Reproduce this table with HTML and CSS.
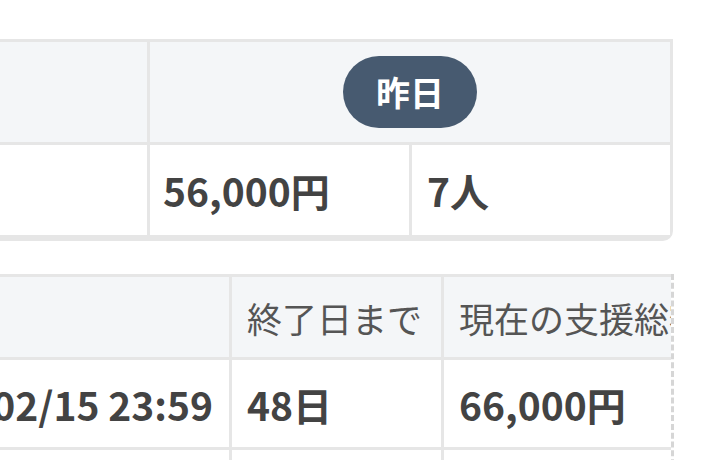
FILE: index.html
```html
<!DOCTYPE html>
<html lang="ja">
<head>
<meta charset="utf-8">
<link rel="stylesheet" href="styles.css">
</head>
<body>
<div class="page">
  <div class="card">
    <div class="cell head first"></div>
    <div class="cell head span2"><span class="badge">昨日</span></div>
    <div class="cell body first"></div>
    <div class="cell body val">56,000円</div>
    <div class="cell body val">7人</div>
  </div>

  <div class="scroller">
    <div class="viewport">
      <div class="grid">
        <div class="cell head first"></div>
        <div class="cell head label">終了日まで</div>
        <div class="cell head label">現在の支援総額</div>
        <div class="cell body val date">2025/02/15 23:59</div>
        <div class="cell body val">48日</div>
        <div class="cell body val">66,000円</div>
        <div class="cell body blank"></div>
        <div class="cell body blank"></div>
        <div class="cell body blank"></div>
      </div>
    </div>
    <div class="edge"></div>
  </div>
</div>
</body>
</html>
```

FILE: styles.css
```css
* { box-sizing: border-box; }

html, body {
  margin: 0;
  padding: 0;
  background: #ffffff;
  overflow: hidden;
}

body {
  width: 716px;
  height: 460px;
  font-family: "Noto Sans CJK JP", "Noto Sans", sans-serif;
  color: #444444;
}

.page {
  padding-top: 39px;
}

.card {
  display: grid;
  grid-template-columns: 347px 259px 258px;
  grid-template-rows: 100px 90px;
  gap: 3px;
  width: 876px;
  margin-left: -203px;
  background: #e6e6e6;
  border: 3px solid #e6e6e6;
  border-bottom-width: 6px;
  border-bottom-right-radius: 10px;
}

.cell {
  display: flex;
  align-items: center;
  padding: 0 15px;
  white-space: nowrap;
}

.head {
  background: #f4f6f8;
}

.body {
  background: #ffffff;
}

.span2 {
  grid-column: 2 / 4;
  justify-content: center;
}

.badge {
  display: inline-flex;
  align-items: center;
  justify-content: center;
  height: 72px;
  padding: 0 33px;
  border-radius: 36px;
  background: #475a70;
  color: #ffffff;
  font-size: 34px;
  font-weight: 700;
  line-height: 1;
}

.val {
  font-size: 39px;
  font-weight: 700;
  color: #434343;
  padding-left: 13px;
}

.card .val + .val {
  padding-left: 15px;
}

.scroller {
  display: flex;
  margin-top: 33px;
  height: 200px;
}

.viewport {
  flex: 0 0 671px;
  overflow: hidden;
}

.edge {
  flex: 0 0 3px;
  border-right: 3px dashed #d6d6d6;
}

.grid {
  display: grid;
  grid-template-columns: 400px 209px 300px;
  grid-template-rows: 80px 87px 60px;
  gap: 3px;
  width: 918px;
  margin-left: -174px;
  background: #e6e6e6;
  border-top: 3px solid #e6e6e6;
  border-left: 3px solid #e6e6e6;
}

.label {
  font-size: 35px;
  font-weight: 400;
  color: #555555;
  overflow: visible;
}

.date {
  justify-content: flex-end;
  padding-right: 16px;
}

.grid .val {
  padding-left: 15px;
}
```
